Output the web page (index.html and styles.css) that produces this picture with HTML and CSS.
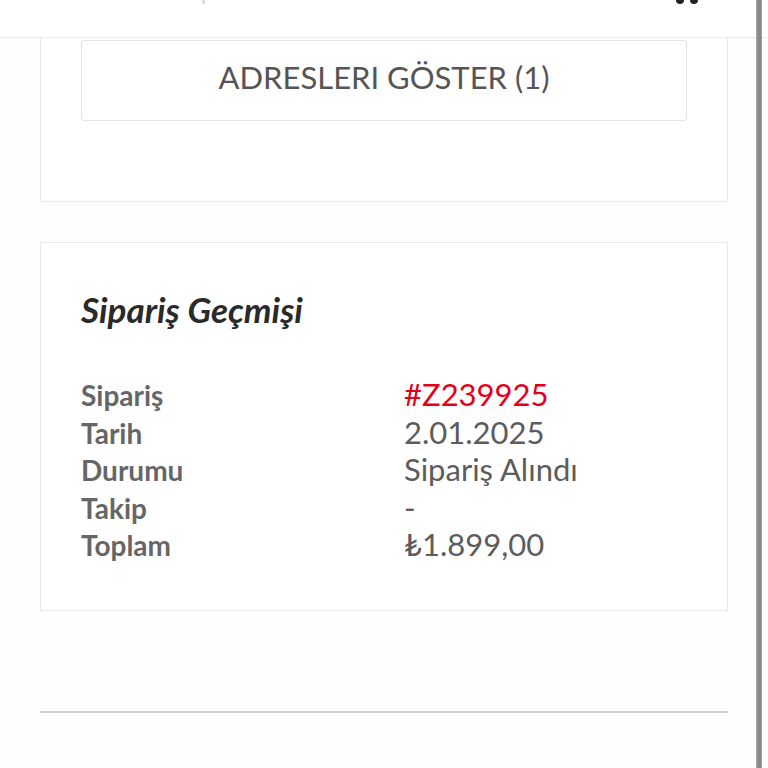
FILE: index.html
```html
<!DOCTYPE html>
<html lang="tr">
<head>
<meta charset="utf-8">
<title>Hesabım</title>
<link rel="stylesheet" href="styles.css">
</head>
<body>
<header class="topbar">
  <span class="topbar-mark"></span>
  <svg class="topbar-icon" width="22" height="6" viewBox="0 0 22 6" aria-hidden="true">
    <circle cx="4" cy="0" r="4" fill="#222"/>
    <circle cx="18" cy="0" r="4" fill="#222"/>
  </svg>
</header>
<main class="content">
  <section class="card card-cut">
    <button class="btn-outline" type="button">ADRESLERI GÖSTER (1)</button>
  </section>
  <section class="card card-orders">
    <h2 class="card-title">Sipariş Geçmişi</h2>
    <dl class="order-grid">
      <dt>Sipariş</dt><dd class="order-no">#Z239925</dd>
      <dt>Tarih</dt><dd>2.01.2025</dd>
      <dt>Durumu</dt><dd>Sipariş Alındı</dd>
      <dt>Takip</dt><dd>-</dd>
      <dt>Toplam</dt><dd>₺1.899,00</dd>
    </dl>
  </section>
  <hr class="divider">
</main>
<div class="scrollbar"></div>
</body>
</html>
```
FILE: styles.css
```css
* { box-sizing: border-box; }
html, body { margin: 0; padding: 0; }
body {
  background: #fdfdfd;
  font-family: "Lato", "Noto Sans", sans-serif;
  width: 768px;
  height: 768px;
  overflow: hidden;
  position: relative;
}
.topbar {
  height: 38px;
  background: #fff;
  border-bottom: 1px solid #e9e9e9;
  display: flex;
  align-items: flex-start;
  justify-content: space-between;
  padding: 0 70px 0 202px;
}
.topbar-mark {
  display: block;
  width: 3px;
  height: 4px;
  background: #dcdcdc;
  border-radius: 0 0 2px 2px;
}
.topbar-icon { display: block; }
.content {
  padding: 0 40px 0 40px;
  width: 768px;
}
.card {
  background: #fff;
  border: 1px solid #e8e8e8;
}
.card-cut {
  border-top: none;
  padding: 2px 40px 80px 40px;
}
.btn-outline {
  display: block;
  width: 100%;
  height: 81px;
  background: #fff;
  border: 1px solid #e4e4e4;
  border-radius: 3px;
  font-family: "Lato", sans-serif;
  font-size: 31px;
  line-height: 37px;
  color: #555;
  padding: 0 0 7px 0;
  margin: 0;
}
.card-orders {
  margin-top: 40px;
  padding: 44.5px 40px 46px 40px;
}
.card-title {
  margin: 0 0 46.75px 0;
  font-size: 35px;
  line-height: 42px;
  font-weight: 700;
  font-style: italic;
  color: #2a2a2a;
}
.order-grid {
  display: grid;
  grid-template-columns: 323px 1fr;
  grid-auto-rows: 37.5px;
  margin: 0;
  line-height: 37.5px;
  align-items: baseline;
}
.order-grid dt {
  font-size: 28px;
  font-weight: 700;
  color: #666;
}
.order-grid dd {
  margin: 0;
  font-size: 31px;
  color: #5c5c5c;
}
.order-grid .order-no { color: #e3001b; }
.divider {
  margin: 100px 0 0 0;
  border: 0;
  border-top: 2px solid #cfcfcf;
}
.scrollbar {
  position: absolute;
  top: 0;
  right: 6px;
  width: 6px;
  height: 768px;
  background: #8a8a8a;
  border-left: 1px solid #a8a8a8;
  border-right: 1px solid #9a9a9a;
}
```
